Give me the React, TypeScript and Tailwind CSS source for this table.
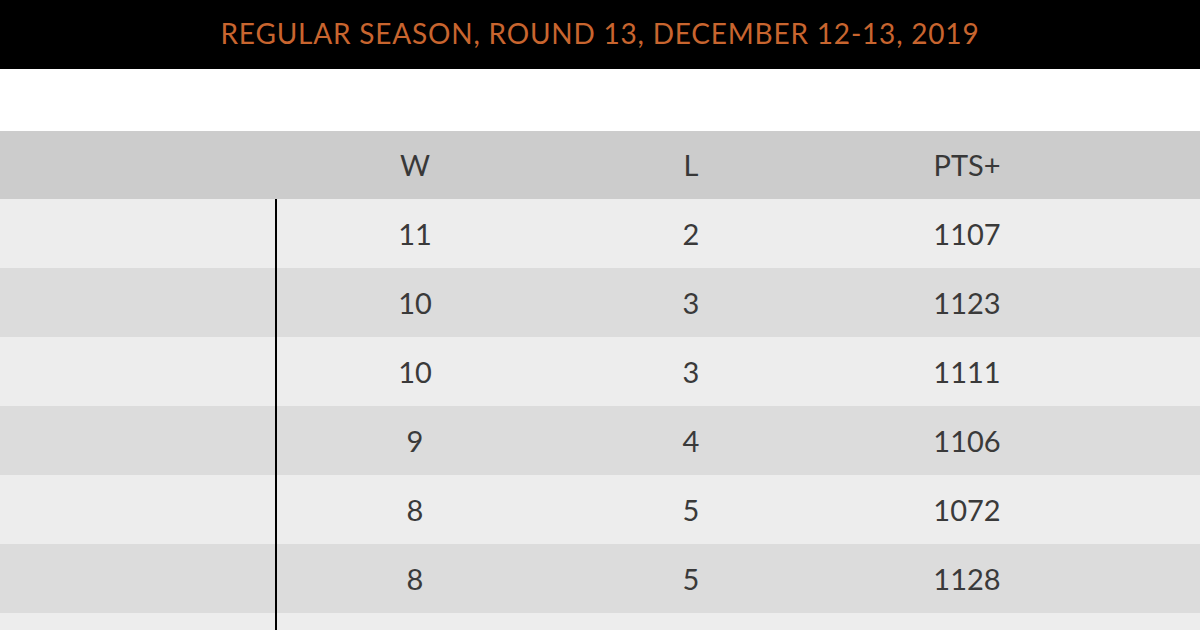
import React from "react";

const rows = [
  { w: "11", l: "2", p: "1107" },
  { w: "10", l: "3", p: "1123" },
  { w: "10", l: "3", p: "1111" },
  { w: "9", l: "4", p: "1106" },
  { w: "8", l: "5", p: "1072" },
  { w: "8", l: "5", p: "1128" },
  { w: "", l: "", p: "" },
];

export default function App() {
  return (
    <div
      className="w-[1200px] h-[630px] overflow-hidden bg-white"
      style={{ fontFamily: "Lato, 'Open Sans', sans-serif" }}
    >
      <div className="h-[69px] bg-black flex items-center justify-center pb-[4px]">
        <span className="text-[28px] text-[#c8652f] tracking-[0.8px] leading-none">
          REGULAR SEASON, ROUND 13, DECEMBER 12-13, 2019
        </span>
      </div>
      <div className="h-[62px]" />
      <div className="grid grid-cols-[277px_276px_276px_276px_1fr] h-[68px] bg-[#cccccc] text-[29px] text-[#383838] items-center">
        <div />
        <div className="text-center">W</div>
        <div className="text-center">L</div>
        <div className="text-center">PTS+</div>
        <div />
      </div>
      {rows.map((r, i) => (
        <div
          key={i}
          className={`grid grid-cols-[277px_276px_276px_276px_1fr] h-[69px] text-[29px] text-[#3a3a3a] ${
            i % 2 === 0 ? "bg-[#ededed]" : "bg-[#dcdcdc]"
          }`}
        >
          <div className="border-r-2 border-black" />
          <div className="flex items-center justify-center">{r.w}</div>
          <div className="flex items-center justify-center">{r.l}</div>
          <div className="flex items-center justify-center">{r.p}</div>
          <div />
        </div>
      ))}
    </div>
  );
}
